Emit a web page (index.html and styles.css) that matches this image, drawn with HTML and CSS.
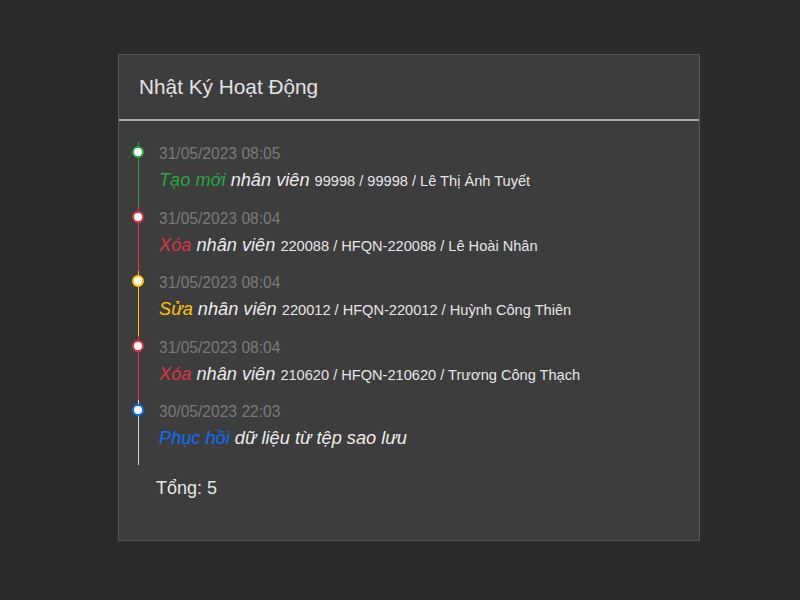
FILE: index.html
```html
<!DOCTYPE html>
<html lang="vi">
<head>
<meta charset="utf-8">
<title>Nhật Ký Hoạt Động</title>
<link rel="stylesheet" href="styles.css">
</head>
<body>
<div class="card">
  <div class="card-header">Nhật Ký Hoạt Động</div>
  <div class="card-body">
    <ul class="timeline">
      <li class="item item-create">
        <div class="date">31/05/2023 08:05</div>
        <div class="action"><em class="verb create">Tạo mới</em> <em class="obj">nhân viên</em> <span class="detail">99998 / 99998 / Lê Thị Ánh Tuyết</span></div>
      </li>
      <li class="item item-delete">
        <div class="date">31/05/2023 08:04</div>
        <div class="action"><em class="verb delete">Xóa</em> <em class="obj">nhân viên</em> <span class="detail">220088 / HFQN-220088 / Lê Hoài Nhân</span></div>
      </li>
      <li class="item item-edit">
        <div class="date">31/05/2023 08:04</div>
        <div class="action"><em class="verb edit">Sửa</em> <em class="obj">nhân viên</em> <span class="detail">220012 / HFQN-220012 / Huỳnh Công Thiên</span></div>
      </li>
      <li class="item item-delete">
        <div class="date">31/05/2023 08:04</div>
        <div class="action"><em class="verb delete">Xóa</em> <em class="obj">nhân viên</em> <span class="detail">210620 / HFQN-210620 / Trương Công Thạch</span></div>
      </li>
      <li class="item item-restore">
        <div class="date">30/05/2023 22:03</div>
        <div class="action"><em class="verb restore">Phục hồi</em> <em class="obj">dữ liệu từ tệp sao lưu</em></div>
      </li>
    </ul>
    <div class="total">Tổng: 5</div>
  </div>
</div>
</body>
</html>
```

FILE: styles.css
```css
html, body {
  margin: 0;
  padding: 0;
}
body {
  background: #2b2b2b;
  font-family: "Liberation Sans", Arial, sans-serif;
  color: #e6e6e6;
  width: 800px;
  height: 600px;
  overflow: hidden;
}
.card {
  margin: 54px 0 0 118px;
  width: 580px;
  height: 485px;
  background: #3d3d3d;
  border: 1px solid #565656;
}
.card-header {
  height: 64px;
  display: flex;
  align-items: center;
  padding: 0 20px;
  font-size: 20.8px;
  color: #e2e2e2;
  border-bottom: 2px solid #a9a9a9;
}
.card-body {
  padding-top: 21px;
}
.timeline {
  list-style: none;
  margin: 0 0 0 19px;
  padding: 0;
}
.item {
  position: relative;
  border-left: 1px solid #ddd;
  padding: 0 0 11.5px 20px;
}
.item::before {
  content: "";
  position: absolute;
  left: -7px;
  top: 4px;
  width: 8px;
  height: 8px;
  border-radius: 50%;
  background: #fff;
  border: 2px solid #ddd;
}
.item-create { border-left-color: #28a745; }
.item-create::before { border-color: #28a745; }
.item-delete { border-left-color: #dc3545; }
.item-delete::before { border-color: #dc3545; }
.item-edit { border-left-color: #ffc107; }
.item-edit::before { border-color: #ffc107; }
.item-restore { border-left-color: #d8d8d8; }
.item-restore::before { border-color: #0d6efd; }
.date {
  font-size: 15.6px;
  line-height: 23px;
  color: #7a7a7a;
}
.action {
  font-size: 18.2px;
  line-height: 30px;
  height: 30px;
  white-space: nowrap;
}
.verb, .obj {
  font-style: italic;
}
.obj { color: #ececec; }
.create { color: #28a745; }
.delete { color: #dc3545; }
.edit { color: #ffc107; }
.restore { color: #0d6efd; }
.detail {
  font-size: 14.6px;
  line-height: 1;
  color: #e6e6e6;
}
.total {
  margin: 11px 0 0 37px;
  font-size: 18px;
  line-height: 24px;
  color: #e6e6e6;
}
```
